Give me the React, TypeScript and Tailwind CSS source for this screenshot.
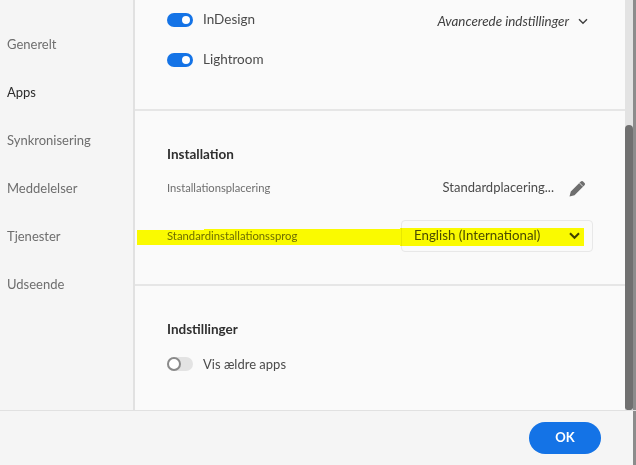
import React from 'react'

const navItems = ["Generelt", "Apps", "Synkronisering", "Meddelelser", "Tjenester", "Udseende"];

function Toggle({ on, label, size }: { on: boolean; label: string; size: string }) {
  return (
    <div className="flex items-center gap-[10px] h-[20px]">
      {on ? (
        <div className="w-[26px] h-[14px] rounded-full bg-[#1473e6] flex items-center justify-end pr-[1px]">
          <div className="w-[12px] h-[12px] rounded-full bg-white border-[2px] border-[#1473e6]" />
        </div>
      ) : (
        <div className="w-[26px] h-[14px] rounded-full bg-[#e3e3e3] flex items-center">
          <div className="w-[14px] h-[14px] rounded-full bg-white border-[2px] border-[#8a8a8a]" />
        </div>
      )}
      <span className={`${size} text-[#4b4b4b]`}>{label}</span>
    </div>
  );
}

export default function App() {
  return (
    <div className="w-[636px] h-[465px] flex flex-col bg-[#f5f5f5] overflow-hidden relative font-['Lato',sans-serif]">
      <div className="flex h-[411px] border-b border-[#e1e1e1]">
        {/* Sidebar */}
        <div className="w-[135px] shrink-0 border-r-2 border-[#e1e1e1] pl-[7px] pt-[21px] flex flex-col">
          {navItems.map((item) => (
            <div
              key={item}
              className={`h-[48px] flex items-center text-[13px] ${item === "Apps" ? "text-[#2c2c2c]" : "text-[#6e6e6e]"}`}
            >
              {item}
            </div>
          ))}
        </div>

        {/* Content */}
        <div className="flex-1 bg-[#fafafa] flex flex-col">
          <div className="h-[111px] shrink-0 border-b-2 border-[#e6e6e6] pl-[32px] pr-[37px] pt-[10px] flex justify-between items-start">
            <div className="flex flex-col gap-[20px]">
              <Toggle on label="InDesign" size="text-[13.5px] -mt-[2px]" />
              <Toggle on label="Lightroom" size="text-[13.5px] -mt-[2px]" />
            </div>
            <div className="flex items-center gap-[9px] h-[20px] mt-[1px]">
              <span className="text-[13.4px] italic text-[#3f3f3f]">Avancerede indstillinger</span>
              <svg width="10" height="7" viewBox="0 0 10 7" fill="none">
                <path d="M1 1.2L5 5.2L9 1.2" stroke="#3f3f3f" strokeWidth="1.4" />
              </svg>
            </div>
          </div>

          <div className="h-[175px] shrink-0 border-b-2 border-[#e6e6e6] pl-[32px] pr-[32px] pt-[34px]">
            <div className="text-[13.5px] font-bold text-[#2f2f2f] leading-[18px]">Installation</div>
            <div className="flex justify-between items-center mt-[12px] h-[26px]">
              <span className="text-[11.2px] text-[#6e6e6e]">Installationsplacering</span>
              <div className="flex items-center gap-[15px] pr-[7px]">
                <span className="text-[13px] text-[#4b4b4b]">Standardplacering...</span>
                <svg width="17" height="17" viewBox="0 0 17 17">
                  <path d="M0.5 16.5L1.8 11.5L11.8 1.5Q12.8 0.5 13.8 1.2L15.8 3.2Q16.5 4.2 15.5 5.2L5.5 15.2Z" fill="#6e6e6e" />
                  <path d="M10.5 3L14 6.5" stroke="#fafafa" strokeWidth="0.8" />
                </svg>
              </div>
            </div>
            <div className="flex justify-between items-center mt-[19px]">
              <span className="text-[11.3px] text-[#6e6e6e]">Standardinstallationssprog</span>
              <div className="w-[192px] h-[32px] rounded-[4px] border border-[#e8e8e8] flex items-center justify-between pl-[12px] pr-[12px]">
                <span className="text-[13.3px] text-[#4b4b4b]">English (International)</span>
                <svg width="11" height="8" viewBox="0 0 11 8" fill="none">
                  <path d="M1 1.2L5.5 5.8L10 1.2" stroke="#3f3f3f" strokeWidth="2" />
                </svg>
              </div>
            </div>
          </div>

          <div className="flex-1 pl-[32px] pt-[34px]">
            <div className="text-[13.5px] font-bold text-[#2f2f2f] leading-[18px]">Indstillinger</div>
            <div className="mt-[16px]">
              <Toggle on={false} label="Vis ældre apps" size="text-[13px] mt-[1px]" />
            </div>
          </div>
        </div>

        {/* Scrollbar */}
        <div className="w-[11px] shrink-0 bg-[#e3e3e3] flex flex-col justify-end border-r-[3px] border-[#8c8c8c]">
          <div className="h-[285px] bg-[#707070] rounded-t-[5px] rounded-b-[3px]" />
        </div>
      </div>

      {/* Footer */}
      <div className="flex-1 flex items-center justify-end pr-[32px] border-r-[3px] border-[#8c8c8c]">
        <button className="w-[72px] h-[32px] rounded-full bg-[#1473e6] text-white text-[13px] font-bold">OK</button>
      </div>

      {/* Yellow marker over the language row */}
      <div className="absolute left-[137px] top-[230px] w-[67px] h-[15px] bg-[#ffff00] mix-blend-multiply" />
      <div className="absolute left-[204px] top-[229px] w-[196px] h-[16px] bg-[#ffff00] mix-blend-multiply" />
      <div className="absolute left-[400px] top-[228px] w-[184px] h-[18px] bg-[#ffff00] mix-blend-multiply" />
    </div>
  );
}
